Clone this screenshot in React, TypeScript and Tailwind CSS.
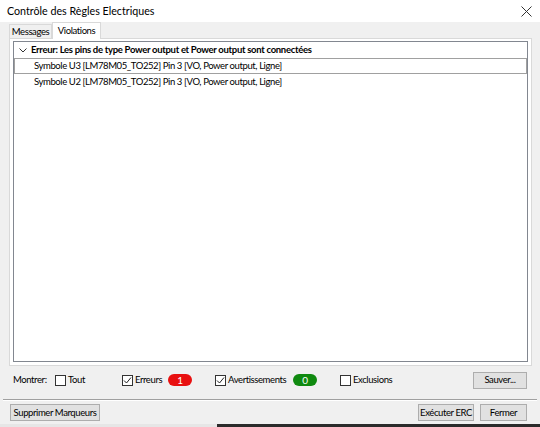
import React from "react";

const font = { fontFamily: 'Lato, "Noto Sans", sans-serif' };

function CheckBox({ checked }: { checked?: boolean }) {
  return (
    <span className="w-[11px] h-[11px] border border-[#333] bg-white flex items-center justify-center shrink-0">
      {checked && (
        <svg width="9" height="9" viewBox="0 0 9 9" fill="none" stroke="#222" strokeWidth="1">
          <path d="M1 4.5 L3.5 7 L8 1.5" />
        </svg>
      )}
    </span>
  );
}

function Option({ label, checked, w }: { label: string; checked?: boolean; w?: string }) {
  return (
    <label className="flex items-center gap-[2px]">
      <CheckBox checked={checked} />
      <span className={w}>{label}</span>
    </label>
  );
}

function Badge({ value, color }: { value: string; color: string }) {
  return (
    <span className={`${color} text-white text-[10px] leading-none w-[24px] h-[12px] rounded-full flex items-center justify-center`}>
      {value}
    </span>
  );
}

function Btn({ label, w }: { label: string; w: string }) {
  return (
    <button className={`${w} h-[17px] bg-[#e1e1e1] border border-[#adadad] leading-none text-black flex items-center justify-center whitespace-nowrap`}>
      {label}
    </button>
  );
}

export default function App() {
  const rows = [
    "Symbole U3 [LM78M05_TO252] Pin 3 [VO, Power output, Ligne]",
    "Symbole U2 [LM78M05_TO252] Pin 3 [VO, Power output, Ligne]",
  ];

  return (
    <div className="w-[540px] h-[427px] flex flex-col text-[9.5px] tracking-[-0.4px] text-black overflow-hidden" style={font}>
      {/* barre de titre */}
      <div className="h-[22px] bg-white flex items-center justify-between pl-[7px] pr-[8px]">
        <span className="text-[10.7px] tracking-normal">Contrôle des Règles Electriques</span>
        <svg width="11" height="11" viewBox="0 0 11 11" stroke="#333" strokeWidth="1">
          <path d="M0.5 0.5 L10.5 10.5 M10.5 0.5 L0.5 10.5" />
        </svg>
      </div>

      <div className="flex-1 bg-[#f0f0f0] flex flex-col">
        {/* onglets */}
        <div className="h-[16px] flex items-end pl-[9px]">
          <div className="w-[43px] h-[14px] border border-b-0 border-[#d9d9d9] bg-[#f0f0f0] flex items-center justify-center leading-none">
            Messages
          </div>
          <div className="w-[49px] h-[17px] border border-b-0 border-[#d9d9d9] bg-white flex items-center justify-center leading-none -mb-px relative z-10">
            Violations
          </div>
        </div>

        <div className="ml-[9px] mr-[8px] h-[328px] bg-white border border-[#d9d9d9] p-[2px_3px_3px_3px]">
          <div className="h-full border border-[#828790] bg-white">
            <div className="h-[16px] flex items-center pl-[5px] gap-[4px] font-bold tracking-[-0.3px]">
              <svg width="8" height="8" viewBox="0 0 8 8" fill="none" stroke="#333" strokeWidth="1">
                <path d="M0.5 2.5 L4 6 L7.5 2.5" />
              </svg>
              <span>Erreur: Les pins de type Power output et Power output sont connectées</span>
            </div>
            <div className="h-[16px] flex items-center pl-[19px] border border-[#a0a0a0] bg-white">
              {rows[0]}
            </div>
            <div className="h-[16px] flex items-center pl-[20px]">{rows[1]}</div>
          </div>
        </div>

        {/* filtres */}
        <div className="h-[33px] pb-[5px] flex items-center pl-[13px] pr-[13px]">
          <span className="w-[42px]">Montrer:</span>
          <div className="w-[67px]">
            <Option label="Tout" />
          </div>
          <div className="w-[93px] flex items-center">
            <Option label="Erreurs" checked w="w-[33px]" />
            <Badge value="1" color="bg-[#e81010]" />
          </div>
          <div className="w-[125px] flex items-center">
            <Option label="Avertissements" checked w="w-[65px]" />
            <Badge value="0" color="bg-[#108a10]" />
          </div>
          <Option label="Exclusions" />
          <div className="ml-auto">
            <Btn label="Sauver..." w="w-[54px]" />
          </div>
        </div>

        <div className="mx-[3px] border-t border-[#a0a0a0] border-b border-b-white" />

        {/* boutons */}
        <div className="h-[23px] flex items-center pl-[10px] pr-[13px]">
          <Btn label="Supprimer Marqueurs" w="w-[90px]" />
          <div className="ml-auto flex gap-[6px]">
            <Btn label="Exécuter ERC" w="w-[56px]" />
            <Btn label="Fermer" w="w-[47px]" />
          </div>
        </div>
      </div>

      <div className="h-[3px] flex">
        <div className="w-[217px] bg-[#e6e6e6]" />
        <div className="flex-1 bg-[#2b2b2b]" />
      </div>
    </div>
  );
}
